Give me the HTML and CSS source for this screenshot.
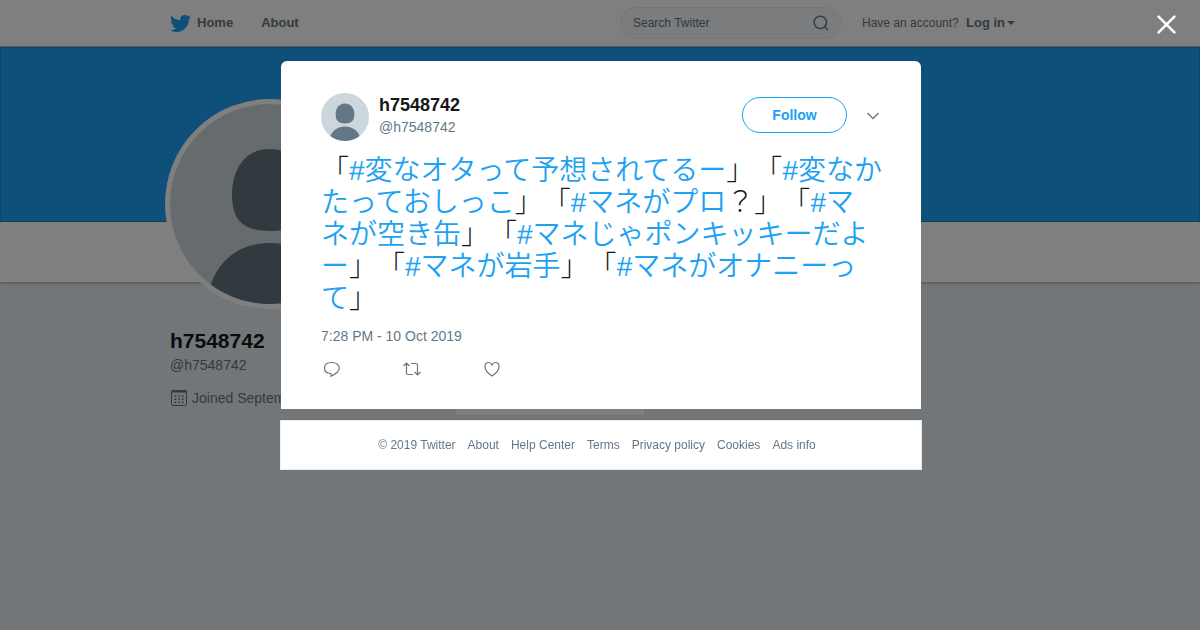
FILE: index.html
```
<!DOCTYPE html>
<html lang="ja">
  <head>
    <meta charset="UTF-8" />
    <meta name="viewport" content="width=device-width, initial-scale=1.0" />
    <title>h7548742 on Twitter</title>
    <link rel="stylesheet" href="styles.css">
  </head>
  <body>
    <header class="topbar">
      <div class="container topbar-inner">
        <nav class="nav">
          <a class="nav-home" href="#">
            <svg class="bird" viewBox="0 0 24 24"><path d="M23.954 4.569c-.885.389-1.83.654-2.825.775 1.014-.611 1.794-1.574 2.163-2.723-.951.555-2.005.959-3.127 1.184-.896-.959-2.173-1.559-3.591-1.559-2.717 0-4.92 2.203-4.92 4.917 0 .39.045.765.127 1.124C7.691 8.094 4.066 6.13 1.64 3.161c-.427.722-.666 1.561-.666 2.475 0 1.71.87 3.213 2.188 4.096-.807-.026-1.566-.248-2.228-.616v.061c0 2.385 1.693 4.374 3.946 4.827-.413.111-.849.171-1.296.171-.314 0-.615-.03-.916-.086.631 1.953 2.445 3.377 4.604 3.417-1.68 1.319-3.809 2.105-6.102 2.105-.39 0-.779-.023-1.17-.067 2.189 1.394 4.768 2.209 7.557 2.209 9.054 0 13.999-7.496 13.999-13.986 0-.209 0-.42-.015-.63.961-.689 1.8-1.56 2.46-2.548z"/></svg>
            Home
          </a>
          <a href="#">About</a>
        </nav>
        <form class="search">
          <input type="text" aria-label="Search Twitter" placeholder="Search Twitter">
          <button type="button" aria-label="Search">
            <svg viewBox="0 0 16 16"><circle cx="7.3" cy="7.3" r="6.2"/><path d="M11.8 11.8L15 15"/></svg>
          </button>
        </form>
        <div class="session">
          <span>Have an account?</span>
          <a href="#">Log in<i class="caret"></i></a>
        </div>
      </div>
    </header>

    <div class="banner"></div>
    <div class="profile-nav"></div>

    <div class="container profile">
      <aside class="sidebar">
        <svg class="avatar-large" viewBox="0 0 200 200">
          <path d="M100 45c26 0 38 21 38 46 0 26-12 36-38 36s-38-10-38-36c0-25 12-46 38-46z"/>
          <path d="M37 200c3-39 29-61 63-61s60 22 63 61z"/>
        </svg>
        <h1>h7548742</h1>
        <p class="handle">@h7548742</p>
        <p class="joined">
          <svg viewBox="0 0 18 18"><rect x="1.5" y="1.5" width="15" height="15" rx="1.5"/><path d="M1.5 2.5h15" stroke-width="2"/><path d="M4.600 7h9M4.600 10.200h9M4.600 13.400h9" stroke-width="1.600" stroke-dasharray="1.600 2.100"/></svg>
          Joined September 2019
        </p>
      </aside>
      <div class="stream"></div>
    </div>

    <div class="overlay">
      <button class="close" type="button" aria-label="Close">
        <svg viewBox="0 0 18 18"><path d="M1.5 1.5l15 15M16.5 1.5l-15 15"/></svg>
      </button>
      <div class="modal">
        <article class="tweet">
          <div class="tweet-header">
            <svg class="avatar" viewBox="0 0 48 48">
              <path d="M24 10.500c6.300 0 9.400 5 9.400 11s-3.100 9-9.400 9-9.400-3-9.400-9 3.100-11 9.400-11z"/>
              <path d="M8 48c1-9.300 7.800-14.600 16-14.600s15 5.300 16 14.600z"/>
            </svg>
            <div class="author">
              <strong>h7548742</strong>
              <span>@h7548742</span>
            </div>
            <button class="follow" type="button">Follow</button>
            <button class="more" type="button" aria-label="More">
              <svg viewBox="0 0 12 8"><path d="M.5 1l5.500 5.500 5.500-5.500"/></svg>
            </button>
          </div>
          <p class="tweet-text">「<a href="#">#変なオタって予想されてるー</a>」「<a href="#">#変なか<br>たっておしっこ</a>」「<a href="#">#マネがプロ</a>？」「<a href="#">#マ<br>ネが空き缶</a>」「<a href="#">#マネじゃポンキッキーだよ<br>ー</a>」「<a href="#">#マネが岩手</a>」「<a href="#">#マネがオナニーっ<br>て</a>」</p>
          <p class="date">7:28 PM - 10 Oct 2019</p>
          <div class="actions">
            <button type="button" aria-label="Reply">
              <svg viewBox="0 0 20 16"><path d="M8.500 12.500C5 12.300 2.500 10.200 2.500 7c0-3.500 2.800-5.500 7-5.500s7.800 2 7.800 5.300c0 4.200-4.300 6.600-8.300 8.300.3-1 .2-2-.5-2.600z"/></svg>
            </button>
            <button type="button" aria-label="Retweet">
              <svg viewBox="0 0 20 16"><path d="M1.500 5l3-3 3 3M4.500 2v10q0 1.500 1.500 1.500h5M9 2.500h5q1.500 0 1.500 1.500v10M12.500 11l3 3 3-3"/></svg>
            </button>
            <button type="button" aria-label="Like">
              <svg viewBox="0 0 20 16"><path d="M10 15C6 12.500 3 9.500 3 5.800 3 3.300 4.600 1.500 6.600 1.500c1.500 0 2.800 1 3.400 2.500.6-1.500 1.900-2.500 3.400-2.500 2 0 3.600 1.800 3.600 4.300 0 3.700-3 6.700-7 9.200z"/></svg>
            </button>
          </div>
        </article>
        <footer class="footer">
          <span>© 2019 Twitter</span>
          <a href="#">About</a>
          <a href="#">Help Center</a>
          <a href="#">Terms</a>
          <a href="#">Privacy policy</a>
          <a href="#">Cookies</a>
          <a href="#">Ads info</a>
        </footer>
      </div>
    </div>
  </body>
</html>
```
FILE: styles.css
```
* {
  box-sizing: border-box;
}
body {
  margin: 0;
  background-color: #e6ecf0;
  color: #14171a;
  font-family: "Liberation Sans", "Noto Sans CJK JP", sans-serif;
  font-size: 14px;
  line-height: 20px;
}
h1,
p {
  margin: 0;
}
a {
  color: inherit;
  text-decoration: none;
}
button {
  padding: 0;
  border: 0;
  background: none;
  color: inherit;
  font-family: inherit;
  cursor: pointer;
}
svg {
  display: block;
  fill: none;
  stroke: currentColor;
  flex-shrink: 0;
}
.container {
  max-width: 860px;
  margin: 0 auto;
}

/* top bar */
.topbar {
  background-color: #fff;
  border-bottom: 1px solid rgba(0, 0, 0, 0.25);
  color: #66757f;
}
.topbar-inner {
  display: flex;
  align-items: center;
  height: 46px;
  padding-right: 15px;
}
.nav {
  display: flex;
  align-items: center;
  gap: 28px;
  font-size: 13px;
  font-weight: bold;
}
.nav-home {
  display: flex;
  align-items: center;
  gap: 6px;
}
.bird {
  width: 21px;
  height: 21px;
  fill: #1da1f2;
  stroke: none;
}
.search {
  display: flex;
  align-items: center;
  width: 221px;
  height: 32px;
  margin-left: auto;
  padding: 0 11px 0 12px;
  border: 1px solid #e6ecf0;
  border-radius: 16px;
  background-color: #f5f8fa;
}
.search input {
  flex: 1;
  min-width: 0;
  padding: 0;
  border: 0;
  background: none;
  font-family: inherit;
  font-size: 12px;
}
.search input::placeholder {
  color: #66757f;
}
.search svg {
  width: 16px;
  height: 16px;
  stroke-width: 1.4;
}
.session {
  display: flex;
  justify-content: space-between;
  width: 153px;
  margin-left: 21px;
  font-size: 12px;
}
.session a {
  display: flex;
  align-items: center;
  font-size: 13px;
  font-weight: bold;
}
.caret {
  margin-left: 2px;
  border: 4px solid transparent;
  border-top-color: currentColor;
  border-bottom: 0;
}

/* profile page */
.banner {
  height: 175px;
  background-color: #1da1f2;
  border: 1px solid rgba(0, 0, 0, 0.15);
}
.profile-nav {
  height: 60px;
  background-color: #fff;
  box-shadow: 0 1px 3px rgba(0, 0, 0, 0.3);
}
.profile {
  display: flex;
}
.sidebar {
  width: 286px;
}
.avatar-large {
  position: relative;
  width: 210px;
  height: 210px;
  margin: -183px 0 20px -5px;
  border: 5px solid #fff;
  border-radius: 50%;
  background-color: #ccd6dd;
  fill: #66757f;
  stroke: none;
}
.sidebar h1 {
  font-size: 21px;
  line-height: 24px;
}
.handle,
.joined {
  color: #66757f;
}
.handle {
  margin-top: 2px;
}
.joined {
  display: flex;
  align-items: center;
  gap: 4px;
  margin-top: 13px;
}
.joined svg {
  width: 18px;
  height: 18px;
}
.stream {
  width: 188px;
  height: 133px;
  background-color: #fff;
}

/* tweet overlay */
.overlay {
  position: fixed;
  inset: 0;
  padding: 61px 0 0 2px;
  background-color: rgba(0, 0, 0, 0.5);
}
.close {
  position: absolute;
  top: 15px;
  right: 24px;
  color: #fff;
}
.close svg {
  width: 19px;
  height: 19px;
  stroke-width: 2.4;
  stroke-linecap: round;
}
.modal {
  max-width: 642px;
  margin: 0 auto;
}
.tweet {
  margin: 0 1px 11px;
  padding: 32px 40px;
  border-radius: 6px 6px 0 0;
  background-color: #fff;
}
.tweet-header {
  display: flex;
  align-items: center;
}
.avatar {
  width: 48px;
  height: 48px;
  border-radius: 50%;
  background-color: #ccd6dd;
  fill: #657786;
  stroke: none;
}
.author {
  display: flex;
  flex-direction: column;
  flex: 1;
  margin: 0 0 4px 10px;
}
.author strong {
  font-size: 18px;
  line-height: 24px;
}
.author span,
.date {
  color: #657786;
}
.follow {
  width: 105px;
  height: 36px;
  margin-bottom: 4px;
  border: 1px solid #1da1f2;
  border-radius: 18px;
  color: #1da1f2;
  font-size: 14px;
  font-weight: bold;
}
.more {
  margin: 0 2px 2px 20px;
  color: #657786;
}
.more svg {
  width: 12px;
  height: 8px;
  stroke-width: 1.3;
}
.tweet-text {
  margin-top: 14px;
  font-size: 28px;
  font-weight: 300;
  line-height: 32px;
  white-space: nowrap;
  text-spacing-trim: space-all;
}
.tweet-text a {
  color: #1da1f2;
  font-weight: 350;
}
.date {
  margin-top: 11px;
}
.actions {
  display: flex;
  gap: 60px;
  margin: 15px 0 0 1px;
  color: #657786;
}
.actions svg {
  width: 20px;
  height: 16px;
  stroke-width: 1.2;
}
.footer {
  display: flex;
  justify-content: center;
  gap: 12px;
  padding: 14px 8px 14px 0;
  border: 1px solid #e6ecf0;
  background-color: #fff;
  color: #657786;
  font-size: 12px;
}
```
